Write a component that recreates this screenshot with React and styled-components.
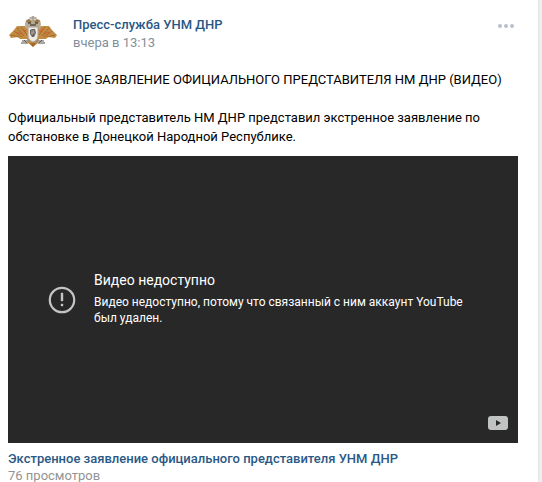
import React from "react";
import styled, { createGlobalStyle } from "styled-components";

const GlobalStyle = createGlobalStyle`
  * { box-sizing: border-box; }
  body {
    margin: 0;
    overflow: hidden;
    background: #edeef0;
    color: #000;
    font-family: Roboto, "Open Sans", sans-serif;
    font-size: 13px;
    line-height: 19px;
  }
`;

const Page = styled.main`
  min-height: 100vh;
  padding-right: 3px;
  display: flex;
`;

const Post = styled.article`
  flex: 1;
  min-width: 0;
  padding: 6px 20px 0 8px;
  background: #fff;
  border-right: 1px solid #e3e4e8;
`;

const Header = styled.header`
  display: flex;
  align-items: flex-start;
  height: 50px;
`;

const AvatarLink = styled.a`
  width: 50px;
  height: 50px;
  margin-right: 15px;
  svg { display: block; }
`;

const Author = styled.div`
  flex: 1;
  padding-top: 10px;
  display: flex;
  flex-direction: column;
  align-items: flex-start;
`;

const NameLink = styled.a`
  color: #2a5885;
  font-weight: 500;
  line-height: 18px;
  text-decoration: none;
`;

const DateLink = styled.a`
  color: #828f9b;
  line-height: 18px;
  text-decoration: none;
`;

const MenuButton = styled.button`
  margin-top: 13px;
  margin-right: 3px;
  padding: 5px 0;
  border: 0;
  background: none;
  cursor: pointer;
  svg { display: block; }
`;

const Text = styled.p`
  margin: ${({ $first }) => ($first ? "14px" : "19px")} 0 0;
`;

const Player = styled.section`
  position: relative;
  margin-top: 10px;
  width: 100%;
  aspect-ratio: 510 / 287;
  padding: 0 40px;
  display: flex;
  align-items: center;
  background: #282828;
  color: #fff;
`;

const WarningIcon = styled.svg`
  flex: none;
  margin-right: 18px;
`;

const Message = styled.div`
  padding-bottom: 2px;
`;

const MessageTitle = styled.h2`
  margin: 0 0 5px;
  font-size: 14px;
  font-weight: 400;
  line-height: 18px;
`;

const MessageText = styled.p`
  margin: 0;
  font-size: 12px;
  line-height: 16px;
`;

const YouTubeLink = styled.a`
  position: absolute;
  right: 10px;
  bottom: 13px;
  svg { display: block; }
`;

const VideoTitle = styled.a`
  display: block;
  margin-top: 7px;
  color: #2a5885;
  font-weight: 500;
  line-height: 18px;
  text-decoration: none;
`;

const Views = styled.div`
  color: #939393;
  line-height: 16px;
`;

function Emblem() {
  return (
    <svg width="50" height="50" viewBox="0 0 50 50" aria-hidden="true">
      <path d="M20 23 L17 20 L9 20 L6 24 L1 29 L3 32 L10 31 L12 33 L19 33 L20 37 L25 41 L30 37 L31 33 L38 33 L40 31 L47 32 L49 29 L44 24 L41 20 L33 20 L30 23Z" fill="#c28c43" />
      <path d="M9 22l7 8M13 21l6 8M6 25l8 6M3 29l8 2M41 22l-7 8M37 21l-6 8M44 25l-8 6M47 29l-8 2" stroke="#a1682b" strokeWidth="1" />
      <path d="M9 26l5 2M15 23l3 3M41 26l-5 2M35 23l-3 3" stroke="#cf6537" strokeWidth="1.2" />
      <path d="M14 35h8M28 35h8M13 37h7M30 37h7" stroke="#918983" strokeWidth="1.7" />
      <path d="M16 34l3 3M34 34l-3 3" stroke="#5f5b57" strokeWidth="1" />
      <path d="M18 23 L17 18 L18 14 L21 13 L23 11 L25 10 L27 11 L29 13 L32 14 L33 18 L32 23Z" fill="#b8ab94" />
      <path d="M18 15l3-2 3 3-3 2M32 15l-3-2-3 3 3 2" fill="#9b7949" />
      <path d="M21 11h8l-1 3h-6Z" fill="#d2cfc7" />
      <path d="M25 10v5M22 12h6" stroke="#9b9180" strokeWidth="1" />
      <path d="M20 17h3M27 17h3M22 19h6" stroke="#57514b" strokeWidth="1.5" />
      <path d="M20 21h10v8c0 4-2 6-5 7c-3-1-5-3-5-7Z" fill="#eeeae6" stroke="#aaa298" />
      <path d="M22 24l2-1h3l1 4-2 4h-2l-2-3Z" fill="#68615e" />
      <path d="M24 24v5M26 24l-1 3M23 27h4" stroke="#aaa49d" strokeWidth="1" />
      <path d="M22 37l3 4 3-4" fill="#a36827" />
    </svg>
  );
}

export default function App() {
  return (
    <>
      <GlobalStyle />
      <Page>
        <Post>
          <Header>
            <AvatarLink href="#author" aria-label="Пресс-служба УНМ ДНР">
              <Emblem />
            </AvatarLink>
            <Author>
              <NameLink href="#author">Пресс-служба УНМ ДНР</NameLink>
              <DateLink href="#post">вчера в 13:13</DateLink>
            </Author>
            <MenuButton type="button" aria-label="Действия">
              <svg width="17" height="4" viewBox="0 0 17 4" fill="#b8c1cb">
                <circle cx="2" cy="2" r="2" />
                <circle cx="8" cy="2" r="2" />
                <circle cx="14" cy="2" r="2" />
              </svg>
            </MenuButton>
          </Header>
          <Text $first>ЭКСТРЕННОЕ ЗАЯВЛЕНИЕ ОФИЦИАЛЬНОГО ПРЕДСТАВИТЕЛЯ НМ ДНР (ВИДЕО)</Text>
          <Text>
            Официальный представитель НМ ДНР представил экстренное заявление по
            обстановке в Донецкой Народной Республике.
          </Text>
          <Player>
            <WarningIcon width="28" height="28" viewBox="0 0 28 28" aria-hidden="true">
              <circle cx="14" cy="14" r="12.2" fill="none" stroke="#c4c4c4" strokeWidth="2.2" />
              <path d="M13 7h2v8h-2zM13 18h2v2h-2z" fill="#c4c4c4" stroke="#c4c4c4" strokeWidth=".4" />
            </WarningIcon>
            <Message>
              <MessageTitle>Видео недоступно</MessageTitle>
              <MessageText>
                Видео недоступно, потому что связанный с ним аккаунт YouTube был удален.
              </MessageText>
            </Message>
            <YouTubeLink href="#youtube" aria-label="YouTube">
              <svg width="20" height="14" viewBox="0 0 20 14">
                <path d="M3 0h14q3 0 3 3v8q0 3-3 3H3q-3 0-3-3V3q0-3 3-3Z" fill="#c1c3c2" />
                <path d="M8 4v6l5-3Z" fill="#282828" />
              </svg>
            </YouTubeLink>
          </Player>
          <VideoTitle href="#video">Экстренное заявление официального представителя УНМ ДНР</VideoTitle>
          <Views>76 просмотров</Views>
        </Post>
      </Page>
    </>
  );
}
